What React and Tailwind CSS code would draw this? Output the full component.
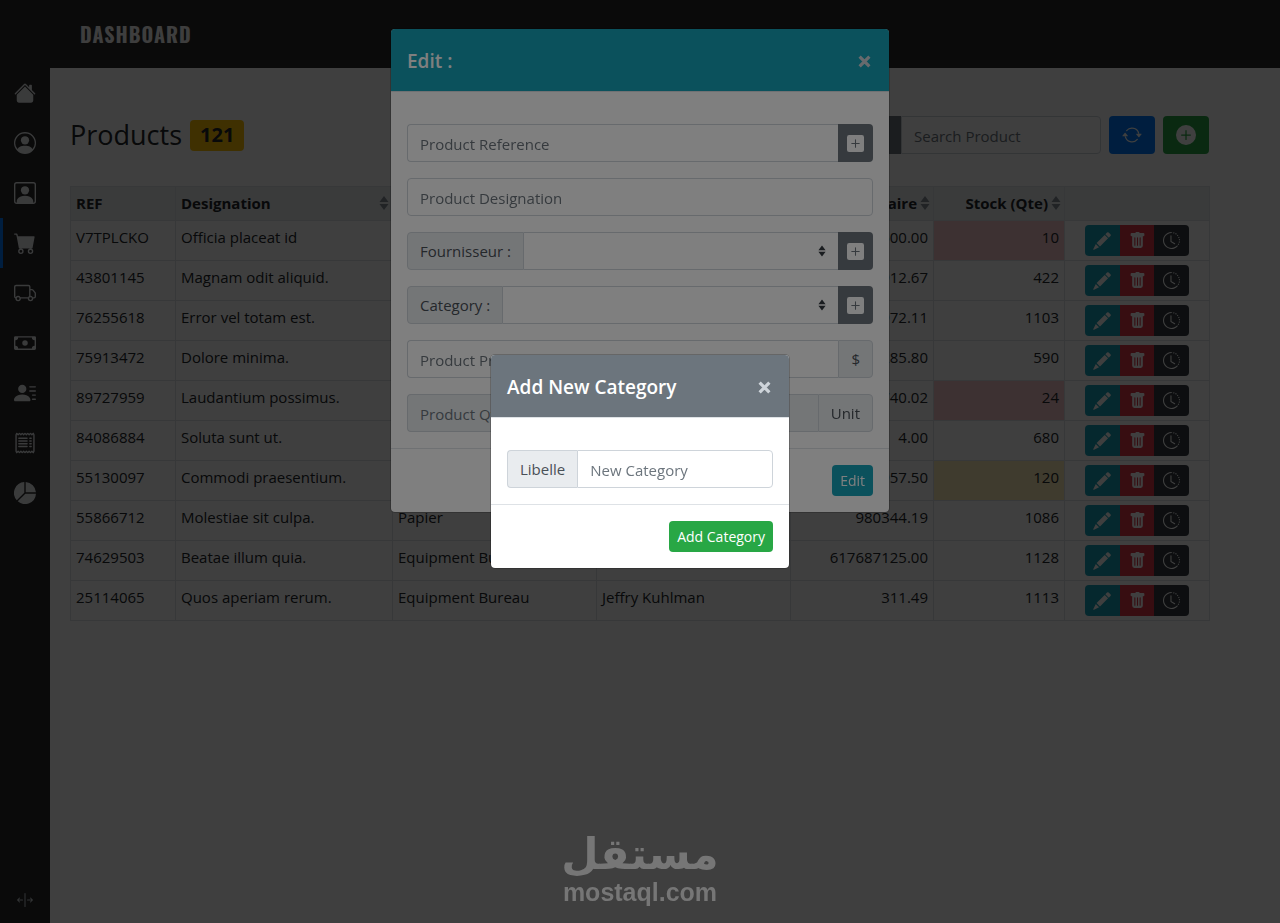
import React, { useState } from "react";
import {
  BsHouseFill,
  BsPersonCircle,
  BsPersonSquare,
  BsCartFill,
  BsTruck,
  BsCash,
  BsPersonLinesFill,
  BsReceipt,
  BsPieChartFill,
  BsArrowsExpandVertical,
  BsArrowRepeat,
  BsPlusCircleFill,
  BsPlusSquareFill,
  BsTrashFill,
  BsClockHistory,
  BsSearch,
} from "react-icons/bs";

const links = [
  { name: "Home", icon: BsHouseFill },
  { name: "Account", icon: BsPersonCircle },
  { name: "Users", icon: BsPersonSquare },
  { name: "Products", icon: BsCartFill, active: true },
  { name: "Suppliers", icon: BsTruck },
  { name: "Payments", icon: BsCash },
  { name: "Clients", icon: BsPersonLinesFill },
  { name: "Orders", icon: BsReceipt },
  { name: "Statistics", icon: BsPieChartFill },
];

const products = [
  { ref: "V7TPLCKO", name: "Officia placeat id", category: "Papier", supplier: "Jeffry Kuhlman", price: "1500.00", stock: 10, level: "danger" },
  { ref: "43801145", name: "Magnam odit aliquid.", category: "Papier", supplier: "Jeffry Kuhlman", price: "5912.67", stock: 422 },
  { ref: "76255618", name: "Error vel totam est.", category: "Equipment Bureau", supplier: "Jeffry Kuhlman", price: "3972.11", stock: 1103 },
  { ref: "75913472", name: "Dolore minima.", category: "Papier", supplier: "Jeffry Kuhlman", price: "285.80", stock: 590 },
  { ref: "89727959", name: "Laudantium possimus.", category: "Papier", supplier: "Jeffry Kuhlman", price: "740.02", stock: 24, level: "danger" },
  { ref: "84086884", name: "Soluta sunt ut.", category: "Papier", supplier: "Jeffry Kuhlman", price: "4.00", stock: 680 },
  { ref: "55130097", name: "Commodi praesentium.", category: "Papier", supplier: "Jeffry Kuhlman", price: "6957.50", stock: 120, level: "warning" },
  { ref: "55866712", name: "Molestiae sit culpa.", category: "Papier", supplier: "Jeffry Kuhlman", price: "980344.19", stock: 1086 },
  { ref: "74629503", name: "Beatae illum quia.", category: "Equipment Bureau", supplier: "Jeffry Kuhlman", price: "617687125.00", stock: 1128 },
  { ref: "25114065", name: "Quos aperiam rerum.", category: "Equipment Bureau", supplier: "Jeffry Kuhlman", price: "311.49", stock: 1113 },
];

const levelClass = {
  danger: "bg-[#f5c6cb]",
  warning: "bg-[#ffeeba]",
};

const groupText =
  "flex items-center border border-[#ced4da] bg-[#e9ecef] px-3 text-[#495057]";
const field =
  "min-w-0 flex-1 border border-[#ced4da] bg-white px-3 pt-[2px] text-[#495057] placeholder:text-[#6c757d] outline-none";

const SortIcon = ({ className }) => (
  <svg viewBox="0 0 10 16" className={className} fill="currentColor" aria-hidden="true">
    <path d="M5 1 9.500 7h-9zM5 15 .5 9h9z" />
  </svg>
);

const PencilIcon = () => (
  <svg viewBox="0 0 16 16" className="size-[18px]" fill="currentColor" aria-hidden="true">
    <path d="M12.500.5a1 1 0 0 1 1.400 0l1.600 1.600a1 1 0 0 1 0 1.400l-1.500 1.500-3-3zM10.400 2.600l3 3-7.200 7.200-3-3zM2.500 10.600l2.900 2.900-4.500 2.200a.4.4 0 0 1-.6-.6z" />
  </svg>
);

const Sidebar = () => (
  <nav className="flex w-[50px] shrink-0 flex-col items-stretch bg-[#282828]">
    {links.map(({ name, icon: Icon, active }) => (
      <a
        key={name}
        href="#"
        aria-label={name}
        className={`flex h-[50px] items-center justify-center border-x-3 border-r-transparent text-[#e9ecef] ${
          active ? "border-l-[#007bff]" : "border-l-transparent"
        }`}
      >
        <Icon className="size-[22px]" />
      </a>
    ))}
    <button
      type="button"
      aria-label="Expand menu"
      className="mt-auto flex h-[46px] items-center justify-center text-[#ced4da]"
    >
      <BsArrowsExpandVertical className="size-4" />
    </button>
  </nav>
);

const HeadCell = ({ children, right, sortable }) => (
  <th className="border border-[#dee2e6] pt-[3px] pr-[3px] pb-[5px] pl-[5px] font-bold">
    <div className={`flex items-center ${right ? "justify-end" : "justify-between"}`}>
      <span className="whitespace-nowrap">{children}</span>
      {sortable && <SortIcon className="ml-[3px] h-4 w-[10px] text-[#868e96]" />}
    </div>
  </th>
);

const ProductTable = () => (
  <table className="mt-8 w-full table-fixed border-collapse text-left leading-6">
    <colgroup>
      <col className="w-[105px]" />
      <col className="w-[217px]" />
      <col className="w-[204px]" />
      <col className="w-[194px]" />
      <col className="w-[143px]" />
      <col className="w-[131px]" />
      <col className="w-[145px]" />
    </colgroup>
    <thead className="bg-[#e9ecef] text-[#212529]">
      <tr className="h-[34px]">
        <HeadCell>REF</HeadCell>
        <HeadCell sortable>Designation</HeadCell>
        <HeadCell sortable>Category</HeadCell>
        <HeadCell sortable>Fournisseur</HeadCell>
        <HeadCell right sortable>Prix Unitaire</HeadCell>
        <HeadCell right sortable>Stock (Qte)</HeadCell>
        <HeadCell />
      </tr>
    </thead>
    <tbody>
      {products.map((p) => (
        <tr key={p.ref} className="h-10 align-top">
          <td className="border border-[#dee2e6] px-[5px] py-1">{p.ref}</td>
          <td className="border border-[#dee2e6] px-[5px] py-1">{p.name}</td>
          <td className="border border-[#dee2e6] px-[5px] py-1">{p.category}</td>
          <td className="border border-[#dee2e6] px-[5px] py-1">{p.supplier}</td>
          <td className="border border-[#dee2e6] px-[5px] py-1 text-right">{p.price}</td>
          <td className={`border border-[#dee2e6] px-[5px] py-1 text-right ${levelClass[p.level] || ""}`}>
            {p.stock}
          </td>
          <td className="border border-[#dee2e6] px-[5px] py-1">
            <div className="mx-auto flex h-[31px] w-[104px] overflow-hidden rounded text-white">
              <button type="button" aria-label="Edit" className="flex flex-1 items-center justify-center bg-[#17a2b8]">
                <PencilIcon />
              </button>
              <button type="button" aria-label="Delete" className="flex flex-1 items-center justify-center bg-[#dc3545]">
                <BsTrashFill className="size-[17px]" />
              </button>
              <button type="button" aria-label="History" className="flex flex-1 items-center justify-center bg-[#343a40]">
                <BsClockHistory className="size-[17px]" />
              </button>
            </div>
          </td>
        </tr>
      ))}
    </tbody>
  </table>
);

const ModalHeader = ({ title, className, onClose }) => (
  <div className={`flex items-center justify-between border-b border-[#dee2e6] px-4 pt-[17px] pb-[15px] text-white ${className}`}>
    <h5 className="text-[19px] leading-[30px] font-semibold">{title}</h5>
    <button type="button" aria-label="Close" onClick={onClose} className="p-[2px]">
      <svg viewBox="0 0 12 12" className="size-[13px]" aria-hidden="true">
        <path d="M1.500 1.500l9 9M10.500 1.500l-9 9" stroke="#ced4da" strokeWidth="3" />
      </svg>
    </button>
  </div>
);

const AddButton = ({ label, onClick }) => (
  <button
    type="button"
    aria-label={label}
    onClick={onClick}
    className="flex w-[35px] items-center justify-center rounded-r bg-[#6c757d] text-white"
  >
    <BsPlusSquareFill className="size-[17px]" />
  </button>
);

const SelectField = ({ id, label, onAdd }) => (
  <div className="flex h-[38px]">
    <label htmlFor={id} className={`${groupText} rounded-l`}>
      {label}
    </label>
    <div className="relative flex flex-1">
      <select id={id} className={`${field} appearance-none border-x-0`} />
      <SortIcon className="pointer-events-none absolute top-3 right-3 h-[14px] w-2 text-[#343a40]" />
    </div>
    <AddButton label="Add" onClick={onAdd} />
  </div>
);

const EditModal = ({ onAddCategory, onClose }) => (
  <div className="fixed inset-0 bg-black/50">
    <div
      role="dialog"
      aria-label="Edit product"
      className="mx-auto mt-7 max-w-[500px] overflow-hidden rounded-[5px] border border-black/20 bg-white bg-clip-padding"
    >
      <ModalHeader title="Edit :" className="bg-[#17a2b8]" onClose={onClose} />
      <div className="flex flex-col gap-4 px-4 pt-8 pb-4">
        <div className="flex h-[38px]">
          <input type="text" aria-label="Product Reference" placeholder="Product Reference" className={`${field} rounded-l border-r-0`} />
          <AddButton label="Generate reference" />
        </div>
        <div className="flex h-[38px]">
          <input type="text" aria-label="Product Designation" placeholder="Product Designation" className={`${field} rounded`} />
        </div>
        <SelectField id="supplier" label="Fournisseur :" />
        <SelectField id="category" label="Category :" onAdd={onAddCategory} />
        <div className="flex h-[38px]">
          <input type="text" id="price" placeholder="Product Price" className={`${field} rounded-l border-r-0`} />
          <label htmlFor="price" className={`${groupText} rounded-r`}>$</label>
        </div>
        <div className="flex h-[38px]">
          <input
            type="text"
            id="quantity"
            disabled
            placeholder="Product Qte"
            className="min-w-0 flex-1 rounded-l border border-r-0 border-[#ced4da] bg-[#e9ecef] px-3 pt-[2px] placeholder:text-[#6c757d]"
          />
          <label htmlFor="quantity" className={`${groupText} rounded-r`}>Unit</label>
        </div>
      </div>
      <div className="flex justify-end border-t border-[#dee2e6] p-4">
        <button type="button" className="h-[31px] rounded bg-[#17a2b8] px-2 text-[14px] text-white">
          Edit
        </button>
      </div>
    </div>
  </div>
);

const CategoryModal = ({ onClose }) => (
  <div className="fixed inset-0 flex items-center justify-center bg-black/50">
    <div
      role="dialog"
      aria-label="Add New Category"
      className="w-[300px] overflow-hidden rounded-[5px] border border-black/20 bg-white bg-clip-padding"
    >
      <ModalHeader title="Add New Category" className="bg-[#6c757d]" onClose={onClose} />
      <div className="px-4 pt-8 pb-4">
        <div className="flex h-[38px]">
          <label htmlFor="libelle" className={`${groupText} rounded-l border-r-0`}>Libelle</label>
          <input type="text" id="libelle" placeholder="New Category" className={`${field} rounded-r`} />
        </div>
      </div>
      <div className="flex justify-end border-t border-[#dee2e6] p-4">
        <button type="button" className="h-[31px] rounded bg-[#28a745] px-2 text-[14px] text-white">
          Add Category
        </button>
      </div>
    </div>
  </div>
);

const Watermark = () => (
  <div className="pointer-events-none fixed inset-x-0 bottom-4 flex flex-col items-center font-bold text-[#767676]">
    <span lang="ar" dir="rtl" className="font-['DejaVu_Sans',sans-serif] text-[43px] leading-[46px]">
      مستقل
    </span>
    <span className="font-['Liberation_Sans',sans-serif] text-[25px] leading-[30px]">mostaql.com</span>
  </div>
);

const App = () => {
  const [showEdit, setShowEdit] = useState(true);
  const [showCategory, setShowCategory] = useState(true);

  return (
    <div className="flex min-h-screen flex-col bg-white font-['Open_Sans',sans-serif] text-[15px] text-[#212529]">
      <header className="flex h-[68px] items-center bg-[#282828] px-20">
        <span className="font-['Oswald','Roboto_Condensed','Open_Sans_Condensed','Open_Sans',sans-serif] text-[20px] font-bold tracking-wider text-[#f8f9fa]">
          DASHBOARD
        </span>
      </header>
      <div className="flex flex-1">
        <Sidebar />
        <main className="min-w-0 flex-1 pt-12 pr-[70px] pl-5">
          <div className="flex h-[38px] items-center justify-between pr-px">
            <h3 className="flex items-center gap-2 text-[27px] font-medium">
              Products
              <span className="flex h-[31px] items-center rounded bg-[#ffc107] px-[10px] text-[20px] font-bold">
                121
              </span>
            </h3>
            <div className="flex h-[38px] gap-2">
              <div className="flex">
                <button type="button" aria-label="Search" className="flex w-10 items-center justify-center rounded-l bg-[#6c757d] text-white">
                  <BsSearch className="size-4" />
                </button>
                <input
                  type="search"
                  aria-label="Search Product"
                  placeholder="Search Product"
                  className="w-[200px] rounded-r border border-[#ced4da] px-3 pt-[2px] placeholder:text-[#6c757d]"
                />
              </div>
              <button type="button" aria-label="Refresh" className="flex w-[46px] items-center justify-center rounded bg-[#007bff] text-white">
                <BsArrowRepeat className="size-5" />
              </button>
              <button
                type="button"
                aria-label="Add product"
                onClick={() => setShowEdit(true)}
                className="flex w-[46px] items-center justify-center rounded bg-[#28a745] text-white"
              >
                <BsPlusCircleFill className="size-5" />
              </button>
            </div>
          </div>
          <ProductTable />
        </main>
      </div>
      {showEdit && (
        <EditModal onAddCategory={() => setShowCategory(true)} onClose={() => setShowEdit(false)} />
      )}
      {showCategory && <CategoryModal onClose={() => setShowCategory(false)} />}
      <Watermark />
    </div>
  );
};

export default App;
